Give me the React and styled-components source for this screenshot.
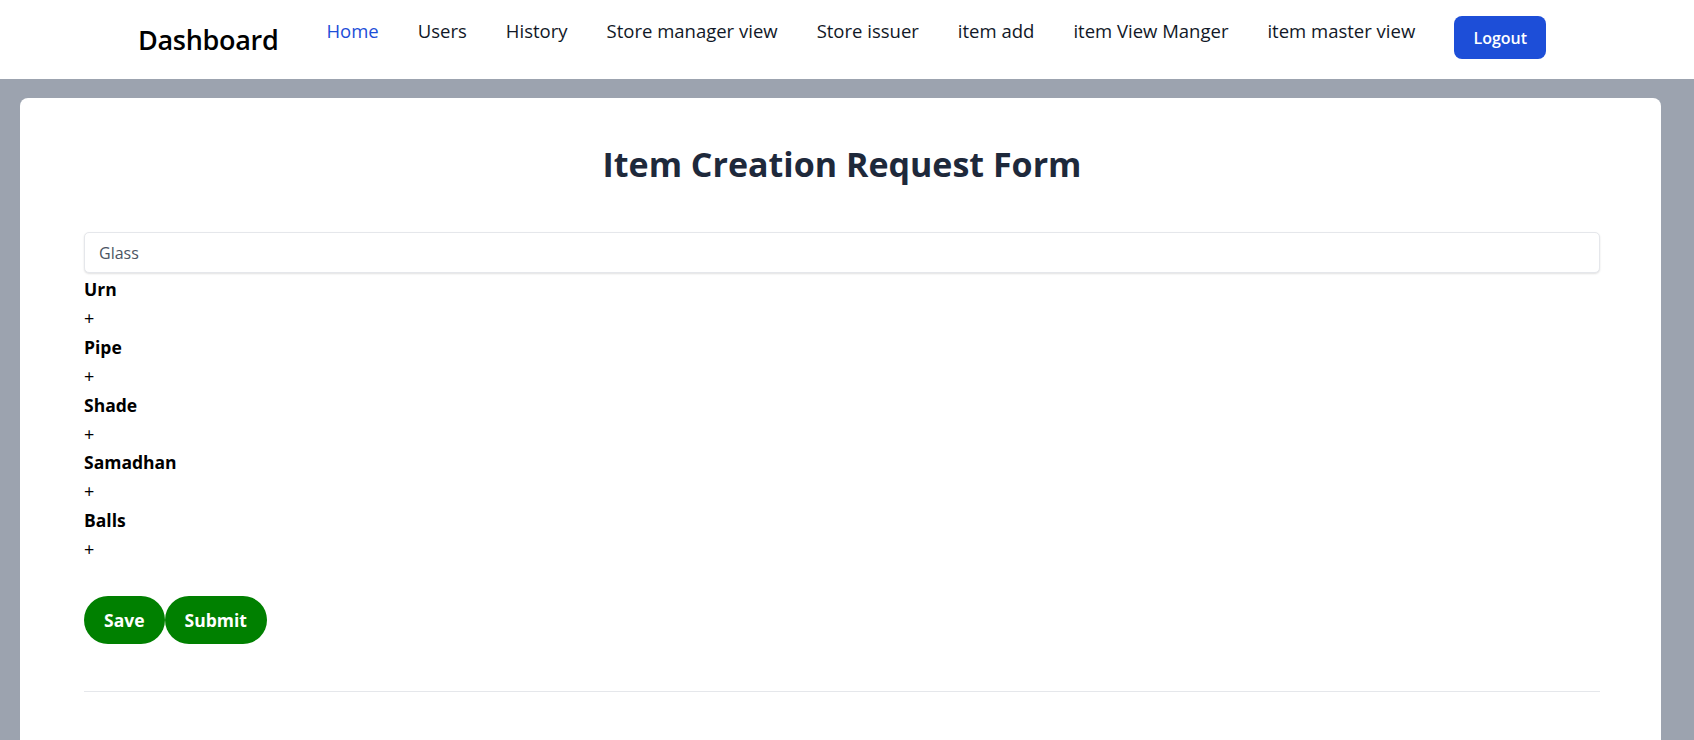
import React from "react";
import styled, { createGlobalStyle } from "styled-components";

const GlobalStyle = createGlobalStyle`
  * { box-sizing: border-box; }
  html, body { margin: 0; padding: 0; }
  body {
    background: #9ca3af;
    font-family: "Open Sans", "Noto Sans", sans-serif;
    color: #000;
    overflow: hidden;
  }
`;

const Nav = styled.nav`
  height: 79px;
  background: #ffffff;
  display: flex;
  align-items: flex-start;
  padding: 16px 0 0 138px;
`;

const Brand = styled.div`
  font-size: 27px;
  line-height: 36px;
  font-weight: 600;
  color: #000;
  margin-top: 6px;
  margin-right: 48px;
  letter-spacing: -0.3px;
`;

const LinkList = styled.ul`
  list-style: none;
  margin: 0;
  padding: 0;
  display: flex;
  align-items: flex-start;
  gap: 39px;
`;

const NavLink = styled.li`
  margin-top: 1px;
  font-size: 18.5px;
  line-height: 28px;
  font-weight: 500;
  color: ${(p) => (p.$active ? "#1d4ed8" : "#111827")};
  white-space: nowrap;
  cursor: pointer;
`;

const LogoutButton = styled.button`
  height: 43px;
  width: 92px;
  border: none;
  border-radius: 8px;
  background: #1d4ed8;
  color: #fff;
  font-family: inherit;
  font-size: 16px;
  font-weight: 600;
  cursor: pointer;
  padding: 0;
`;

const Card = styled.main`
  margin: 19px 33px 0 20px;
  background: #ffffff;
  border-radius: 8px 8px 0 0;
  padding: 46px 61px 80px 64px;
`;

const Title = styled.h1`
  margin: 0 0 48px;
  text-align: center;
  font-size: 34px;
  line-height: 40px;
  font-weight: 700;
  color: #1e293b;
`;

const TextInput = styled.input`
  display: block;
  width: 100%;
  height: 41px;
  border: 1px solid #e5e7eb;
  border-radius: 5px;
  box-shadow: 0 1px 2px rgba(0, 0, 0, 0.12);
  padding: 0 14px;
  font-family: inherit;
  font-size: 16px;
  color: #4b5563;
  background: #fff;
  outline: none;
  margin: 1px 0 2px;
`;

const Category = styled.div`
  font-size: 17.5px;
  line-height: 28.9px;
  font-weight: 700;
  color: #000;
`;

const AddMark = styled.div`
  font-size: 18px;
  line-height: 28.9px;
  font-weight: 400;
  color: #000;
`;

const ButtonRow = styled.div`
  display: flex;
  margin-top: 32px;
`;

const PillButton = styled.button`
  height: 48px;
  padding: 0 ${(p) => p.$pad}px;
  border: none;
  border-radius: 24px;
  background: #008000;
  color: #fff;
  font-family: inherit;
  font-size: 17.5px;
  font-weight: 700;
  cursor: pointer;
`;

const Divider = styled.hr`
  margin: 47px 0 0;
  border: none;
  border-top: 1px solid #e5e7eb;
`;

const links = [
  "Home",
  "Users",
  "History",
  "Store manager view",
  "Store issuer",
  "item add",
  "item View Manger",
  "item master view",
];

const categories = ["Urn", "Pipe", "Shade", "Samadhan", "Balls"];

export default function App() {
  return (
    <>
      <GlobalStyle />
      <Nav>
        <Brand>Dashboard</Brand>
        <LinkList>
          {links.map((l, i) => (
            <NavLink key={l} $active={i === 0}>
              {l}
            </NavLink>
          ))}
          <li>
            <LogoutButton>Logout</LogoutButton>
          </li>
        </LinkList>
      </Nav>
      <Card>
        <Title>Item Creation Request Form</Title>
        <TextInput readOnly value="Glass" />
        {categories.map((c) => (
          <React.Fragment key={c}>
            <Category>{c}</Category>
            <AddMark>+</AddMark>
          </React.Fragment>
        ))}
        <ButtonRow>
          <PillButton $pad={20}>Save</PillButton>
          <PillButton $pad={20}>Submit</PillButton>
        </ButtonRow>
        <Divider />
      </Card>
    </>
  );
}
